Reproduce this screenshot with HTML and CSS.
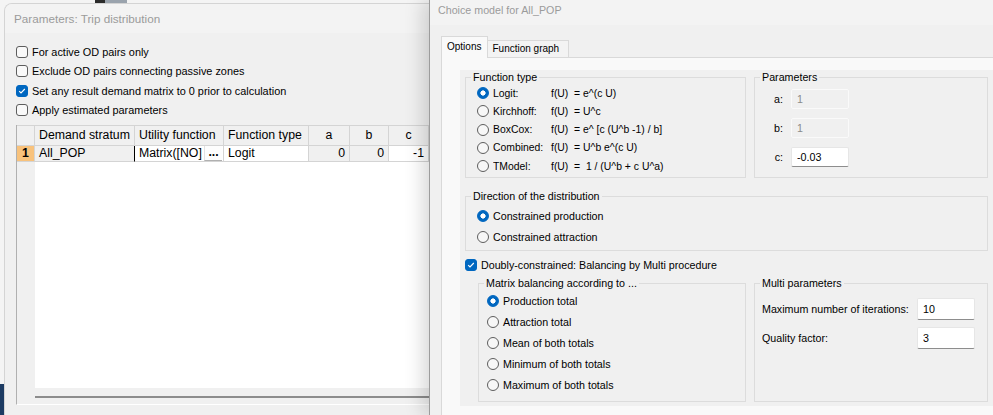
FILE: index.html
```html
<!DOCTYPE html>
<html>
<head>
    <meta charset="UTF-8">
    <title>Trip distribution</title>
    <link rel="stylesheet" href="styles.css">
</head>
<body>
    <div class="desk-strip"></div>
    <div class="desk-tile"></div>

    <div class="window window-params">
        <div class="title">Parameters: Trip distribution</div>
        <div class="check-list">
            <div class="check-row"><span class="checkbox"></span>For active OD pairs only</div>
            <div class="check-row"><span class="checkbox"></span>Exclude OD pairs connecting passive zones</div>
            <div class="check-row"><span class="checkbox on"><svg width="10" height="10" viewBox="0 0 10 10"><path d="M2.2 5.2 L4 7 L7.8 3" fill="none" stroke="#fff" stroke-width="1.1"/></svg></span>Set any result demand matrix to 0 prior to calculation</div>
            <div class="check-row"><span class="checkbox"></span>Apply estimated parameters</div>
        </div>
        <div class="grid">
            <div class="grid-head">
                <div></div>
                <div class="left">Demand stratum</div>
                <div class="left">Utility function</div>
                <div class="left">Function type</div>
                <div>a</div>
                <div>b</div>
                <div>c</div>
                <div>d</div>
            </div>
            <div class="grid-row">
                <div class="row-num">1</div>
                <div class="ro focus">All_POP</div>
                <div class="util">Matrix([NO]<span class="dots">...</span></div>
                <div>Logit</div>
                <div class="ro num">0</div>
                <div class="ro num">0</div>
                <div class="num">-1</div>
                <div class="ro num">1</div>
            </div>
            <div class="grid-fill">
                <div class="gutter"></div>
                <div class="blank"></div>
            </div>
            <div class="hscroll"><div class="hscroll-bar"></div></div>
        </div>
    </div>

    <div class="window window-choice">
        <div class="title">Choice model for All_POP</div>
        <div class="choice-body">
            <div class="tabs">
                <div class="tab active">Options</div>
                <div class="tab">Function graph</div>
            </div>
            <div class="tab-pane">
                <div class="panel">
                    <div class="panel-row">
                        <fieldset class="group group-func">
                            <legend>Function type</legend>
                            <div class="func-list">
                                <div class="opt-row"><span class="radio on"></span><span class="func-name">Logit:</span><span class="formula">f(U)  = e^(c U)</span></div>
                                <div class="opt-row"><span class="radio"></span><span class="func-name">Kirchhoff:</span><span class="formula">f(U)  = U^c</span></div>
                                <div class="opt-row"><span class="radio"></span><span class="func-name">BoxCox:</span><span class="formula">f(U)  = e^ [c (U^b -1) / b]</span></div>
                                <div class="opt-row"><span class="radio"></span><span class="func-name">Combined:</span><span class="formula">f(U)  = U^b e^(c U)</span></div>
                                <div class="opt-row"><span class="radio"></span><span class="func-name">TModel:</span><span class="formula">f(U)  =  1 / (U^b + c U^a)</span></div>
                            </div>
                        </fieldset>
                        <fieldset class="group group-param">
                            <legend>Parameters</legend>
                            <div class="param-list">
                                <div class="param-row"><label>a:</label><input class="field" value="1" disabled></div>
                                <div class="param-row"><label>b:</label><input class="field" value="1" disabled></div>
                                <div class="param-row"><label>c:</label><input class="field" value="-0.03"></div>
                            </div>
                        </fieldset>
                    </div>

                    <fieldset class="group group-dir">
                        <legend>Direction of the distribution</legend>
                        <div class="dir-list">
                            <div class="opt-row"><span class="radio on"></span>Constrained production</div>
                            <div class="opt-row"><span class="radio"></span>Constrained attraction</div>
                        </div>
                    </fieldset>

                    <div class="check-row doubly"><span class="checkbox on"><svg width="10" height="10" viewBox="0 0 10 10"><path d="M2.2 5.2 L4 7 L7.8 3" fill="none" stroke="#fff" stroke-width="1.1"/></svg></span>Doubly-constrained: Balancing by Multi procedure</div>

                    <div class="panel-row">
                        <fieldset class="group group-matrix">
                            <legend>Matrix balancing according to ...</legend>
                            <div class="matrix-list">
                                <div class="opt-row"><span class="radio on"></span>Production total</div>
                                <div class="opt-row"><span class="radio"></span>Attraction total</div>
                                <div class="opt-row"><span class="radio"></span>Mean of both totals</div>
                                <div class="opt-row"><span class="radio"></span>Minimum of both totals</div>
                                <div class="opt-row"><span class="radio"></span>Maximum of both totals</div>
                            </div>
                        </fieldset>
                        <fieldset class="group group-multi">
                            <legend>Multi parameters</legend>
                            <div class="multi-list">
                                <div class="multi-row"><label>Maximum number of iterations:</label><input class="field tall" value="10"></div>
                                <div class="multi-row"><label>Quality factor:</label><input class="field tall" value="3"></div>
                            </div>
                        </fieldset>
                    </div>
                </div>
            </div>
        </div>
    </div>
</body>
</html>
```

FILE: styles.css
```css
body {
    margin: 0;
    width: 993px;
    height: 415px;
    overflow: hidden;
    position: relative;
    background: #f4f4f4;
    font-family: 'Liberation Sans', Arial, sans-serif;
    color: #000;
}

/* desktop bits peeking out */
.desk-strip {
    position: absolute;
    left: 95px;
    top: 0;
    width: 32px;
    height: 3px;
    background: linear-gradient(to right, #2b2b2b 0 10px, #9aa3ad 10px);
}

.desk-tile {
    position: absolute;
    left: 0;
    top: 384px;
    width: 4px;
    height: 31px;
    background: #1d3b63;
}

.window {
    position: absolute;
    box-sizing: border-box;
    overflow: hidden;
}

.window .title {
    color: #9b9b9b;
    background: #f3f3f3;
    white-space: nowrap;
}

/* left window */
.window-params {
    left: 4px;
    top: 3px;
    width: 560px;
    height: 412px;
    background: #f0f0f0;
    border: 1px solid #d4d4d4;
    border-bottom: none;
    border-radius: 8px 8px 0 0;
}

.window-params .title {
    height: 29px;
    line-height: 29px;
    padding-left: 9px;
    font-size: 11.7px;
}

.check-list {
    padding: 9.3px 0 0 11px;
}

.check-row {
    display: flex;
    align-items: center;
    height: 19.3px;
    font-size: 10.9px;
    white-space: nowrap;
}

.checkbox {
    width: 12px;
    height: 12px;
    box-sizing: border-box;
    border: 1px solid #5d5d5d;
    border-radius: 3px;
    background: #f9f9f9;
    margin-right: 4px;
    flex: none;
    display: flex;
    align-items: center;
    justify-content: center;
}

.checkbox.on {
    background: #0067c0;
    border-color: #0067c0;
}

.grid {
    margin: 5.5px 0 0 11px;
    border-left: 1px solid #b0b0b0;
    border-bottom: 1px solid #fff;
}

.grid-head,
.grid-row {
    display: grid;
    grid-template-columns: 18px 100px 89px 85px 41px 39px 40px 120px;
    font-size: 12.3px;
}

.grid-head {
    border-top: 1px solid #d4d4d4;
}

.grid-head > div {
    box-sizing: border-box;
    height: 20px;
    line-height: 19px;
    border-right: 1px solid #d4d4d4;
    border-bottom: 1px solid #d4d4d4;
    background: #f0f0f0;
    text-align: center;
    white-space: nowrap;
}

.grid-head > .left {
    text-align: left;
    padding-left: 4px;
}

.grid-row > div {
    box-sizing: border-box;
    height: 16px;
    line-height: 15px;
    border-right: 1px solid #d4d4d4;
    border-bottom: 1px solid #d4d4d4;
    background: #fff;
    padding: 0 4px;
    white-space: nowrap;
}

.grid-row > .row-num {
    background: #f8c27c;
    font-weight: bold;
    text-align: center;
    padding: 0;
}

.grid-row > .ro {
    background: #f0f0f0;
}

.grid-row > .focus {
    border-right-color: #000;
}

.grid-row > .num {
    text-align: right;
}

.grid-row > .util {
    display: flex;
    padding-right: 1px;
}

.dots {
    margin-left: auto;
    width: 17px;
    height: 14px;
    line-height: 12px;
    text-align: center;
    font-weight: bold;
    border-left: 1px solid #e2e2e2;
    border-bottom: 1px solid #b0b0b0;
    background: #fdfdfd;
}

.grid-fill {
    display: flex;
    height: 226px;
}

.gutter {
    width: 18px;
    background: #f0f0f0;
}

.blank {
    flex: 1;
    background: #fff;
}

.hscroll {
    height: 16px;
    box-sizing: border-box;
    padding: 8px 0 0 18px;
    background: #f0f0f0;
}

.hscroll-bar {
    height: 2px;
    background: #8c8c8c;
}

/* right window */
.window-choice {
    left: 429px;
    top: 0;
    width: 600px;
    height: 415px;
    background: #f0f0f0;
    border-left: 1px solid #9c9c9c;
    box-shadow: -6px 0 18px rgba(0, 0, 0, 0.16);
    overflow: visible;
}

.window-choice .title {
    height: 25px;
    line-height: 20px;
    padding-left: 8px;
    font-size: 10.7px;
}

.choice-body {
    padding: 11px 0 0 11px;
    height: 390px;
    box-sizing: border-box;
    overflow: hidden;
}

.tabs {
    display: flex;
    align-items: flex-end;
    height: 21px;
}

.tab {
    font-size: 10px;
    box-sizing: border-box;
    border: 1px solid #d9d9d9;
    border-bottom: none;
    white-space: nowrap;
}

.tab.active {
    height: 22px;
    line-height: 20px;
    padding: 0 6px 0 5px;
    margin-bottom: -1px;
    background: #f9f9f9;
    position: relative;
    z-index: 1;
}

.tab:not(.active) {
    height: 17px;
    line-height: 15px;
    padding: 0 9px 0 4px;
    border-left: none;
    background: #f3f3f3;
}

.tab-pane {
    border: 1px solid #d9d9d9;
    background: #f9f9f9;
    padding: 12px 0 0 18px;
    height: 360px;
    box-sizing: border-box;
}

.panel {
    width: 540px;
    height: 336px;
    box-sizing: border-box;
    padding-left: 5px;
    background: #f0f0f0;
    font-size: 10.7px;
}

.panel-row {
    display: flex;
}

.group {
    margin: 0;
    padding: 0;
    min-width: 0;
    box-sizing: border-box;
    border: 1px solid #dcdcdc;
}

.group legend {
    margin-left: 5px;
    padding: 0 2px;
    line-height: 14px;
    white-space: nowrap;
}

.group-func {
    width: 281px;
    height: 108px;
}

.group-param {
    width: 234px;
    height: 108px;
    margin-left: 8px;
}

.group-dir {
    width: 523px;
    height: 62px;
    margin-top: 11px;
}

.group-matrix {
    width: 268px;
    height: 126px;
    margin-left: 13px;
}

.group-multi {
    width: 234px;
    height: 126px;
    margin-left: 8px;
}

.opt-row {
    display: flex;
    align-items: center;
    white-space: nowrap;
}

.radio {
    width: 12px;
    height: 12px;
    box-sizing: border-box;
    border: 1px solid #5d5d5d;
    border-radius: 50%;
    background: #f7f7f7;
    margin-right: 4px;
    flex: none;
}

.radio.on {
    border-color: #0067c0;
    background: radial-gradient(circle, #fff 0 2.3px, #0067c0 2.9px);
}

.func-list {
    padding-left: 11px;
    font-size: 10.4px;
}

.func-list .opt-row {
    height: 18.25px;
}

.func-name {
    width: 58px;
    flex: none;
    overflow: hidden;
}

.formula {
    white-space: pre;
}

.param-list {
    padding-top: 5px;
}

.param-row {
    display: flex;
    align-items: center;
    height: 20px;
    margin-bottom: 9px;
}

.param-row label {
    width: 28px;
    margin-right: 8px;
    text-align: right;
}

.field {
    width: 58px;
    height: 20px;
    box-sizing: border-box;
    border: 1px solid #e6e6e6;
    border-bottom-color: #8d8d8d;
    border-radius: 2px;
    background: #fff;
    font: inherit;
    color: #000;
    padding: 0 0 0 5px;
    margin: 0;
}

.field:disabled {
    background: #f0f0f0;
    border-color: #fafafa;
    color: #8a8a8a;
}

.field.tall {
    height: 22px;
}

.dir-list {
    padding: 2.5px 0 0 11px;
}

.dir-list .opt-row {
    height: 20.7px;
}

.doubly {
    margin-top: 6px;
    height: 16px;
    font-size: 10.7px;
    margin-bottom: 3px;
}

.matrix-list {
    padding-left: 8px;
}

.matrix-list .opt-row {
    height: 21px;
}

.multi-list {
    padding: 8px 12px 0 7px;
}

.multi-row {
    display: flex;
    align-items: center;
    justify-content: space-between;
    height: 22px;
    margin-bottom: 7px;
    white-space: nowrap;
}
```
